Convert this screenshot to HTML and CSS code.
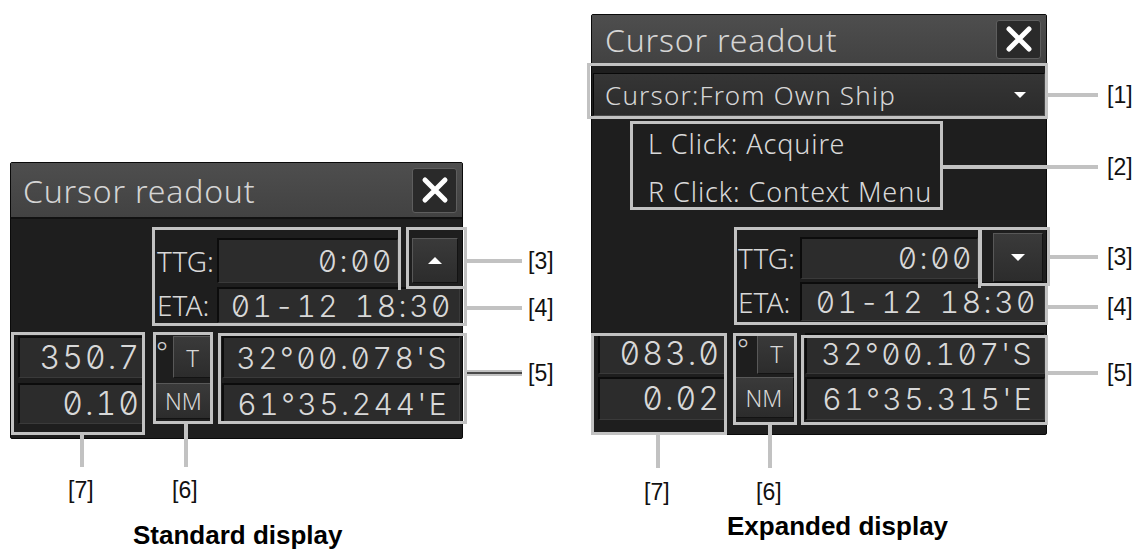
FILE: index.html
```html
<!DOCTYPE html>
<html lang="en">
<head>
  <meta charset="UTF-8" />
  <title>Cursor readout</title>
  <link rel="stylesheet" href="styles.css">
</head>
<body>
  <div class="page">

    <!-- Standard display -->
    <div class="fig fig-std">
      <div class="panel panel-std">
        <div class="titlebar">
          <span class="title">Cursor readout</span>
          <button class="close">
            <svg width="30" height="30" viewBox="0 0 30 30"><path d="M5 5L25 25M25 5L5 25" stroke="#fff" stroke-width="5" stroke-linecap="round"/></svg>
          </button>
        </div>
        <div class="row row-ttg">
          <span class="lbl">TTG:</span>
          <span class="field f-ttg">0:00</span>
          <button class="abtn">
            <svg width="14" height="7" viewBox="0 0 14 7"><path d="M0 7L7 0L14 7Z" fill="#fff"/></svg>
          </button>
        </div>
        <div class="row row-eta">
          <span class="lbl">ETA:</span>
          <span class="field f-eta">01-12 18:30</span>
        </div>
        <div class="row row-pos">
          <span class="field f-num">350.7</span>
          <span class="unit"><span class="deg">°</span><button class="ubtn ubtn-t">T</button></span>
          <span class="field f-pos">32°00.078'S</span>
        </div>
        <div class="row row-spd">
          <span class="field f-num">0.10</span>
          <span class="unit"><button class="ubtn ubtn-nm">NM</button></span>
          <span class="field f-pos">61°35.244'E</span>
        </div>
      </div>
      <p class="caption">Standard display</p>

      <!-- callouts -->
      <div class="box s-ttg"></div>
      <div class="box s-btn"></div>
      <div class="box s-eta"></div>
      <div class="box s-pos"></div>
      <div class="box s-unit"></div>
      <div class="box s-num"></div>
      <div class="hline s-l3"></div>
      <div class="hline s-l4"></div>
      <div class="hline dbl s-l5"></div>
      <div class="vline s-v7"></div>
      <div class="vline s-v6"></div>
      <span class="tag s-t3">[3]</span>
      <span class="tag s-t4">[4]</span>
      <span class="tag s-t5">[5]</span>
      <span class="tag s-t7">[7]</span>
      <span class="tag s-t6">[6]</span>
    </div>

    <!-- Expanded display -->
    <div class="fig fig-exp">
      <div class="panel panel-exp">
        <div class="titlebar">
          <span class="title">Cursor readout</span>
          <button class="close">
            <svg width="30" height="30" viewBox="0 0 30 30"><path d="M5 5L25 25M25 5L5 25" stroke="#fff" stroke-width="5" stroke-linecap="round"/></svg>
          </button>
        </div>
        <div class="dropdown">
          <span>Cursor:From Own Ship</span>
          <svg width="12" height="6" viewBox="0 0 12 6"><path d="M0 0L12 0L6 6Z" fill="#fff"/></svg>
        </div>
        <div class="help">
          <div>L Click: Acquire</div>
          <div>R Click: Context Menu</div>
        </div>
        <div class="row row-ttg">
          <span class="lbl">TTG:</span>
          <span class="field f-ttg">0:00</span>
          <button class="abtn">
            <svg width="14" height="7" viewBox="0 0 14 7"><path d="M0 0L14 0L7 7Z" fill="#fff"/></svg>
          </button>
        </div>
        <div class="row row-eta">
          <span class="lbl">ETA:</span>
          <span class="field f-eta">01-12 18:30</span>
        </div>
        <div class="row row-pos">
          <span class="field f-num">083.0</span>
          <span class="unit"><span class="deg">°</span><button class="ubtn ubtn-t">T</button></span>
          <span class="field f-pos">32°00.107'S</span>
        </div>
        <div class="row row-spd">
          <span class="field f-num">0.02</span>
          <span class="unit"><button class="ubtn ubtn-nm">NM</button></span>
          <span class="field f-pos">61°35.315'E</span>
        </div>
      </div>
      <p class="caption">Expanded display</p>

      <!-- callouts -->
      <div class="box e-drop"></div>
      <div class="box e-help"></div>
      <div class="box e-ttg"></div>
      <div class="box e-btn"></div>
      <div class="box e-eta"></div>
      <div class="box e-pos"></div>
      <div class="box e-unit"></div>
      <div class="box e-num"></div>
      <div class="hline e-l1"></div>
      <div class="hline e-l2"></div>
      <div class="hline e-l3"></div>
      <div class="hline e-l4"></div>
      <div class="hline e-l5"></div>
      <div class="vline e-v7"></div>
      <div class="vline e-v6"></div>
      <span class="tag e-t1">[1]</span>
      <span class="tag e-t2">[2]</span>
      <span class="tag e-t3">[3]</span>
      <span class="tag e-t4">[4]</span>
      <span class="tag e-t5">[5]</span>
      <span class="tag e-t7">[7]</span>
      <span class="tag e-t6">[6]</span>
    </div>

  </div>
</body>
</html>
```

FILE: styles.css
```css
body {
  margin: 0;
  background: #fff;
  font-family: "Liberation Sans", Arial, sans-serif;
}

.page {
  display: flex;
  width: 1136px;
  height: 549px;
  overflow: hidden;
}

.fig {
  position: relative;
  width: 568px;
  height: 549px;
  flex: none;
  box-sizing: border-box;
}

.fig-std {
  padding: 162px 0 0 10px;
}

.fig-exp {
  padding: 14px 0 0 23px;
}

/* ---- panel ---- */

.panel {
  box-sizing: border-box;
  display: flex;
  flex-direction: column;
  background: #1e1e1e;
  border: 1px solid #0a0a0a;
  border-radius: 2px;
  font-family: "Noto Sans", sans-serif;
  font-weight: 300;
  color: #d2d2d2;
}

.panel-std {
  width: 453px;
  height: 277px;
}

.panel-exp {
  width: 456px;
  height: 421px;
}

.titlebar {
  box-sizing: border-box;
  flex: none;
  height: 56px;
  display: flex;
  align-items: center;
  justify-content: space-between;
  padding: 0 5px 0 12px;
  background: linear-gradient(#4e4e4e, #424242);
  border-bottom: 2px solid #111;
}

.panel-exp .titlebar {
  height: 50px;
  padding-left: 13px;
}

.title {
  font-size: 32px;
  letter-spacing: 0.8px;
  color: #d4d4d4;
}

.close {
  box-sizing: border-box;
  width: 45px;
  height: 45px;
  padding: 0;
  display: flex;
  align-items: center;
  justify-content: center;
  background: #2a2a2a;
  border: 1px solid #5e5e5e;
  border-radius: 3px;
}

.panel-exp .close {
  height: 39px;
}

.row {
  display: flex;
  align-items: center;
  flex: none;
}

.lbl {
  flex: none;
  width: 60px;
  font-size: 28px;
  color: #d8d8d8;
}

.field {
  box-sizing: border-box;
  flex: none;
  align-self: stretch;
  display: flex;
  align-items: center;
  justify-content: flex-end;
  padding-right: 3px;
  background: #2c2c2c;
  border-top: 2px solid #0c0c0c;
  border-left: 2px solid #0c0c0c;
  border-right: 1px solid #3a3a3a;
  border-bottom: 1px solid #3a3a3a;
  font-family: Inter, "Noto Sans", sans-serif;
  font-weight: 300;
  font-size: 30px;
  line-height: 1;
  letter-spacing: 2.5px;
  word-spacing: 4px;
  font-variant-numeric: tabular-nums slashed-zero;
  color: #d8d8d8;
}

.f-num {
  font-size: 32px;
  letter-spacing: 2px;
}

.abtn, .ubtn {
  box-sizing: border-box;
  flex: none;
  padding: 0;
  display: flex;
  align-items: center;
  justify-content: center;
  background: linear-gradient(#3a3a3a, #2c2c2c);
  border: 1px solid;
  border-color: #585858 #131313 #131313 #585858;
  font-family: "Noto Sans", sans-serif;
  font-weight: 300;
  color: #d8d8d8;
}

.unit {
  flex: none;
  display: flex;
  align-items: center;
  align-self: stretch;
}

.deg {
  font-size: 28px;
  width: 20px;
  padding-left: 3px;
  align-self: flex-start;
  line-height: 30px;
}

.ubtn-t {
  width: 39px;
  align-self: stretch;
  font-size: 24px;
}

.ubtn-nm {
  width: 57px;
  margin-left: 2px;
  align-self: stretch;
  font-size: 23px;
}

/* standard rows */

.panel-std .row-ttg {
  margin-top: 19px;
  height: 45px;
  padding-left: 146px;
}

.panel-std .f-ttg { width: 181px; }
.panel-std .abtn { width: 46px; height: 45px; margin-left: 14px; }

.panel-std .row-eta {
  margin-top: 4px;
  height: 36px;
  padding-left: 146px;
}

.panel-std .f-eta { width: 243px; padding-right: 6px; }

.panel-std .row-pos {
  margin-top: 13px;
  height: 42px;
  padding-left: 7px;
}

.panel-std .row-spd {
  margin-top: 5px;
  height: 41px;
  padding-left: 7px;
}

.panel-std .f-num { width: 127px; }
.panel-std .unit { width: 59px; margin-left: 8px; }
.panel-std .f-pos { width: 238px; margin-left: 10px; padding-right: 10px; }
.panel-std .row-spd .unit { padding-bottom: 5px; box-sizing: border-box; }

/* expanded rows */

.dropdown {
  box-sizing: border-box;
  flex: none;
  margin: 8px 0 0 1px;
  width: 452px;
  height: 43px;
  display: flex;
  align-items: center;
  justify-content: space-between;
  padding: 0 18px 0 11px;
  background: linear-gradient(#353535, #2b2b2b);
  border: 1px solid;
  border-color: #080808 #4a4a4a #4a4a4a #080808;
  font-size: 26px;
  letter-spacing: 1.2px;
  color: #d6d6d6;
}

.help {
  flex: none;
  margin-top: 4px;
  padding-left: 56px;
  font-size: 27px;
  line-height: 48px;
  letter-spacing: 0.9px;
  color: #d8d8d8;
}

.panel-exp .row-ttg {
  margin-top: 17px;
  height: 49px;
  padding-left: 146px;
}

.panel-exp .lbl { width: 62px; }
.panel-exp .f-ttg { width: 178px; align-self: center; height: 42px; }
.panel-exp .abtn { width: 50px; height: 49px; margin-left: 15px; }

.panel-exp .row-eta {
  height: 39px;
  padding-left: 146px;
}

.panel-exp .f-eta { width: 245px; padding-right: 6px; }

.panel-exp .row-pos {
  margin-top: 12px;
  height: 41px;
  padding-left: 6px;
}

.panel-exp .row-spd {
  margin-top: 3px;
  height: 43px;
  padding-left: 6px;
}

.panel-exp .f-num { width: 127px; }
.panel-exp .unit { width: 62px; margin-left: 9px; }
.panel-exp .f-pos { width: 240px; margin-left: 9px; padding-right: 10px; }
.panel-exp .row-spd .unit { padding-bottom: 2px; box-sizing: border-box; }
.panel-exp .ubtn-nm { width: 60px; margin-left: 0; }

/* captions */

.caption {
  margin: 0;
  font-size: 26px;
  line-height: 26px;
  font-weight: bold;
  color: #000;
}

.fig-std .caption {
  margin: 83px 0 0 123px;
}

.fig-exp .caption {
  margin: 78px 0 0 136px;
}

/* ---- callouts ---- */

.box {
  position: absolute;
  box-sizing: border-box;
  border: 3px solid #c2c2c2;
}

.hline {
  position: absolute;
  height: 4px;
  background: #c2c2c2;
}

.hline.dbl {
  box-sizing: border-box;
  height: 6px;
  background: #4a4a4a;
  border-top: 2px solid #c2c2c2;
  border-bottom: 2px solid #c2c2c2;
}

.vline {
  position: absolute;
  width: 4px;
  background: #c2c2c2;
}

.tag {
  position: absolute;
  font-size: 23px;
  line-height: 26px;
  color: #111;
}

.s-ttg { left: 152px; top: 227px; width: 249px; height: 63px; border-bottom: none; }
.s-btn { left: 406px; top: 227px; width: 61px; height: 62px; }
.s-eta { left: 152px; top: 287px; width: 315px; height: 39px; border-top: none; }
.s-pos { left: 218px; top: 333px; width: 249px; height: 91px; }
.s-unit { left: 153px; top: 332px; width: 60px; height: 92px; }
.s-num { left: 11px; top: 332px; width: 134px; height: 103px; }
.s-l3 { left: 467px; top: 259px; width: 55px; }
.s-l4 { left: 467px; top: 306px; width: 55px; }
.s-l5 { left: 467px; top: 370px; width: 55px; }
.s-v7 { left: 80px; top: 435px; height: 32px; }
.s-v6 { left: 184px; top: 424px; height: 43px; }
.s-t3 { left: 528px; top: 248px; }
.s-t4 { left: 528px; top: 295px; }
.s-t5 { left: 528px; top: 360px; }
.s-t7 { left: 68px; top: 477px; }
.s-t6 { left: 172px; top: 477px; }

.e-drop { left: 19px; top: 63px; width: 461px; height: 56px; }
.e-help { left: 62px; top: 121px; width: 313px; height: 89px; }
.e-ttg { left: 166px; top: 227px; width: 247px; height: 61px; border-bottom: none; }
.e-btn { left: 411px; top: 227px; width: 71px; height: 59px; }
.e-eta { left: 166px; top: 286px; width: 314px; height: 39px; border-top: none; }
.e-pos { left: 233px; top: 335px; width: 247px; height: 90px; }
.e-unit { left: 165px; top: 333px; width: 64px; height: 92px; }
.e-num { left: 23px; top: 333px; width: 136px; height: 102px; }
.e-l1 { left: 480px; top: 93px; width: 50px; }
.e-l2 { left: 375px; top: 165px; width: 155px; }
.e-l3 { left: 482px; top: 255px; width: 48px; }
.e-l4 { left: 480px; top: 305px; width: 50px; }
.e-l5 { left: 480px; top: 371px; width: 50px; }
.e-v7 { left: 88px; top: 435px; height: 33px; }
.e-v6 { left: 200px; top: 425px; height: 43px; }
.e-t1 { left: 539px; top: 82px; }
.e-t2 { left: 539px; top: 154px; }
.e-t3 { left: 539px; top: 244px; }
.e-t4 { left: 539px; top: 294px; }
.e-t5 { left: 539px; top: 360px; }
.e-t7 { left: 76px; top: 479px; }
.e-t6 { left: 188px; top: 479px; }
```
